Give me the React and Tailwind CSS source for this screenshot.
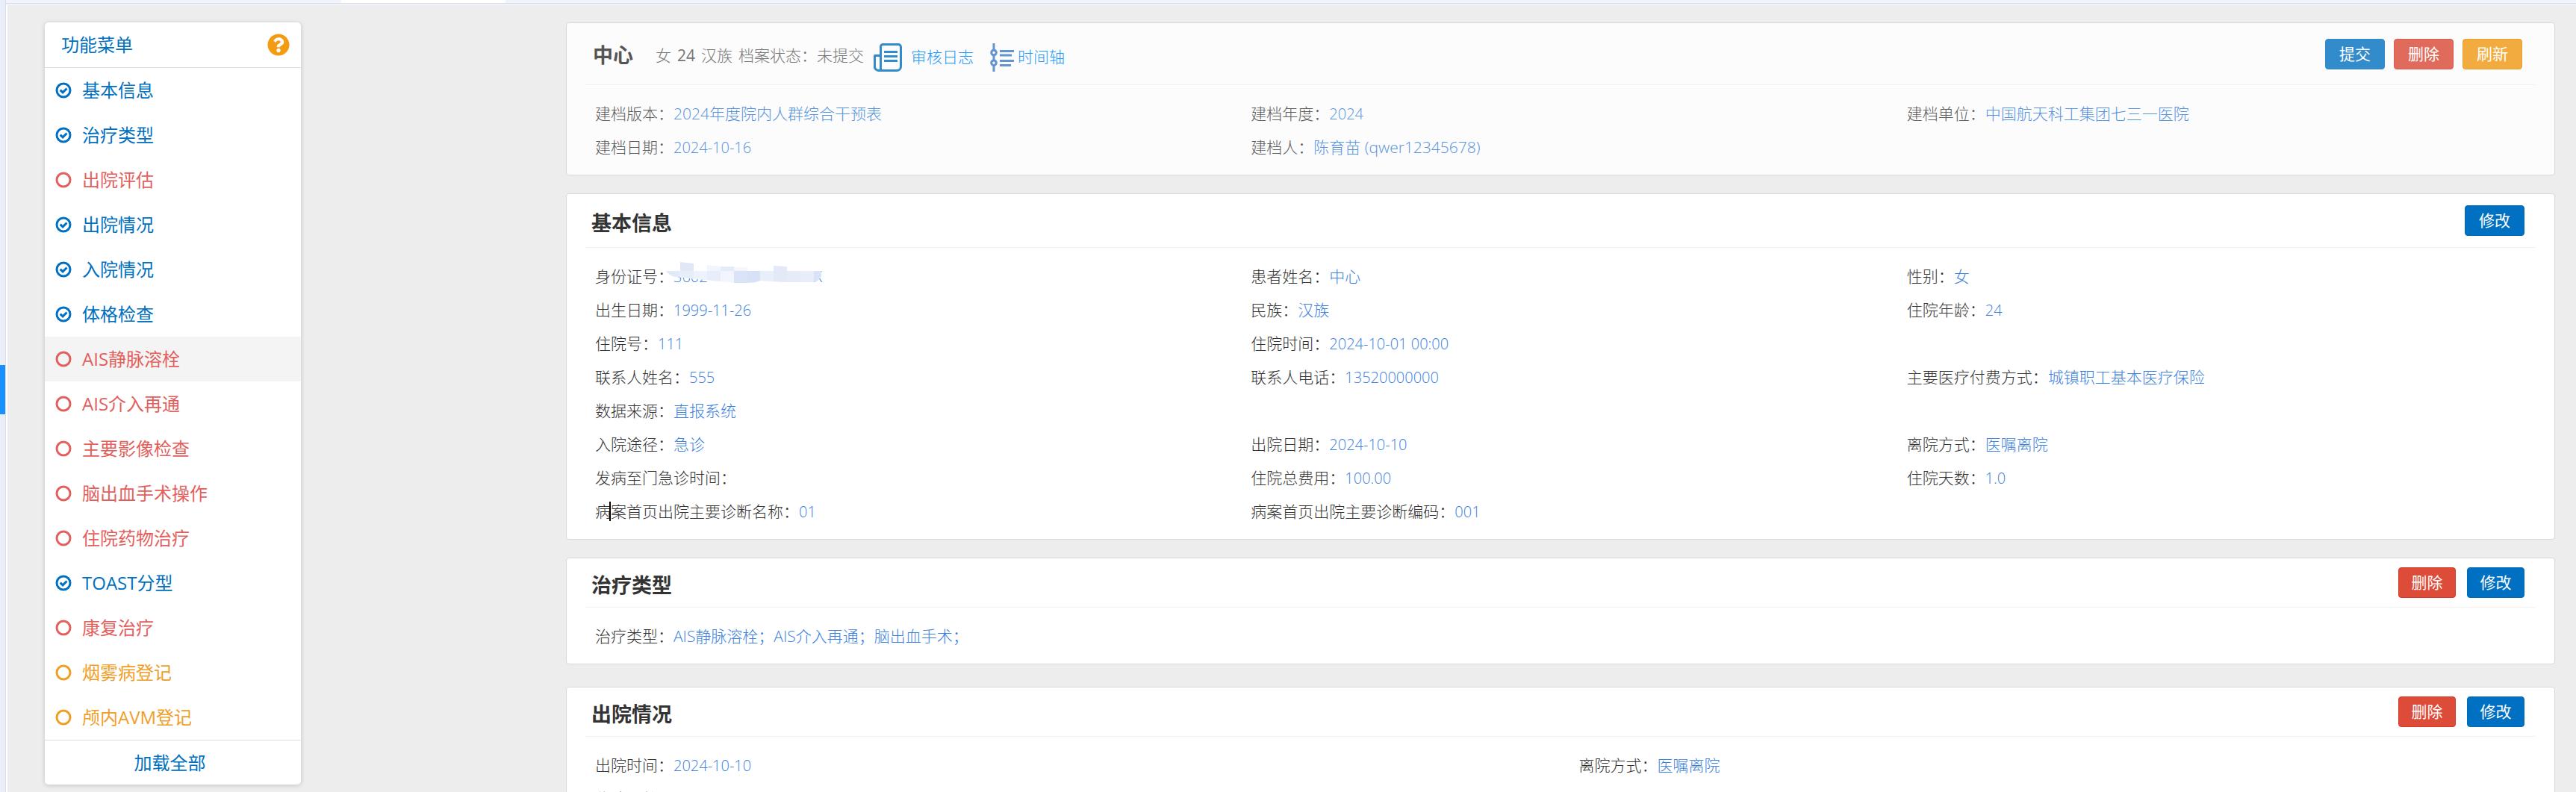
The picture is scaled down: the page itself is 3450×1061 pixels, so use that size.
import React from "react";
import { FaQuestionCircle } from "react-icons/fa";

const MENU = [
  ["基本信息", "done"],
  ["治疗类型", "done"],
  ["出院评估", "todo"],
  ["出院情况", "done"],
  ["入院情况", "done"],
  ["体格检查", "done"],
  ["AIS静脉溶栓", "todo", true],
  ["AIS介入再通", "todo"],
  ["主要影像检查", "todo"],
  ["脑出血手术操作", "todo"],
  ["住院药物治疗", "todo"],
  ["TOAST分型", "done"],
  ["康复治疗", "todo"],
  ["烟雾病登记", "optional"],
  ["颅内AVM登记", "optional"],
];

const TONES = {
  done: "text-[#0070c0]",
  todo: "text-[#e35f5e]",
  optional: "text-[#f09e28]",
};

const BUTTON_TONES = {
  primary: "border-[#006bb8] bg-[#0071c2]",
  danger: "border-[#d73925] bg-[#dd4b39]",
  primarySoft: "border-[#328bcb] bg-[#328bcb]",
  dangerSoft: "border-[#dc5d4d] bg-[#e06b5d]",
  warningSoft: "border-[#ea9f2f] bg-[#f2ab3f]",
};

function StatusIcon({ done }) {
  return (
    <svg viewBox="0 0 22 22" className="size-[22px] shrink-0" fill="none" stroke="currentColor" aria-hidden="true">
      <circle cx="11" cy="11" r="9" strokeWidth="3" />
      {done && <path d="M6.6 10.6l3.5 3.3 5.4-5.4" strokeWidth="3" />}
    </svg>
  );
}

function Btn({ tone, wide, children }) {
  return (
    <button
      type="button"
      className={`h-[41px] rounded-[4px] border text-[21px] leading-none font-normal text-white ${wide ? "w-[80px]" : "w-[77px]"} ${BUTTON_TONES[tone]}`}
    >
      {children}
    </button>
  );
}

function Card({ soft, className = "", children }) {
  return (
    <section className={`rounded-[4px] border border-[#d8d8d8] ${soft ? "bg-[#fcfcfc]" : "bg-white"} ${className}`}>
      {children}
    </section>
  );
}

function CardHead({ title, className, children }) {
  return (
    <div className={`mr-[25px] ml-[25px] flex items-center border-b border-[#f2f2f2] pr-[15px] pl-[8px] ${className}`}>
      <h2 className="pt-[6px] text-[27px] leading-[36px] font-bold text-[#333]">{title}</h2>
      <div className="ml-auto flex gap-[15px]">{children}</div>
    </div>
  );
}

function Fields({ cols = "grid-cols-3", soft, items }) {
  return (
    <dl className={`grid pt-[16px] pr-[4px] pb-[14px] pl-[23px] text-[21px] leading-[45px] font-light ${cols} ${soft ? "text-[#5c5c5c]" : "text-[#333]"}`}>
      {items.map((item, i) =>
        item ? (
          <div key={i} className="flex h-[45px] pl-[15px] whitespace-nowrap">
            <dt className="relative">
              {item[0]}：
              {item[2] && <i className="absolute top-[9px] left-[19px] h-[26px] w-[2px] bg-black" />}
            </dt>
            <dd className={`${soft ? "text-[#5592e0]" : "text-[#3c7fde]"} ${/^[\d.:\- ]+$/.test(item[1]) ? "text-[20px]" : ""}`}>
              {item[1]}
            </dd>
          </div>
        ) : (
          <div key={i} className="h-[45px]" />
        )
      )}
    </dl>
  );
}

const MOSAIC = [
  [0, 18, "#e2eaf7"], [18, 19, "#e6eefa"], [37, 18, "#edf2fc"], [55, 18, "#e7eefa"],
  [73, 18, "#f2f5fe"], [91, 18, "#dbe4f6"], [109, 17, "#d6e2f6"], [126, 18, "#e8effa"],
  [144, 18, "#e4e9f7"], [162, 18, "#e6ebf8"], [180, 18, "#e7eefa"], [198, 10, "#d9e2f6"],
];

function MaskedId() {
  return (
    <span className="relative flex w-[199px] justify-between text-[20px]">
      <span>3602</span>
      <span>X</span>
      <svg viewBox="0 0 208 28" className="absolute top-[3px] -left-[10px] h-[28px] w-[208px]" aria-hidden="true">
        <clipPath id="smear">
          <path d="M0 12H208V19Q204 26 198 27H157L126 25Q120 28 108 28H92L52 24L12 20Q3 17 0 12Z" />
        </clipPath>
        <rect x="8" width="200" height="13" fill="#fff" />
        <path d="M19 0l18 2v10H19z" fill="#e0e7f7" />
        <path d="M55 4l18 2v6H55z" fill="#f1f5fe" />
        <path d="M73 6h18v6H73z" fill="#e5ecf9" />
        <path d="M91 7h18v5H91z" fill="#f3f7fd" />
        <path d="M144 5l18 1v6h-18z" fill="#e4e9f8" />
        <g clipPath="url(#smear)">
          {MOSAIC.map(([x, w, c]) => (
            <rect key={x} x={x} y="12" width={w} height="16" fill={c} />
          ))}
        </g>
      </svg>
    </span>
  );
}

function LogIcon() {
  return (
    <svg viewBox="0 0 38 38" className="size-[38px]" fill="none" stroke="#328bcb" strokeWidth="3" strokeLinejoin="round" aria-hidden="true">
      <path d="M9.500 31V4.500a3 3 0 0 1 3-3H33a3.500 3.500 0 0 1 3.500 3.500V31a5.500 5.500 0 0 1-5.500 5.500H6.500A5 5 0 0 1 1.500 31V16.500h8M9.500 16V36" />
      <path d="M14 11.500h18M14 17.500h18M14 23.500h18" />
    </svg>
  );
}

function TimelineIcon() {
  return (
    <svg viewBox="0 0 32 38" className="h-[38px] w-[32px]" fill="none" stroke="#6394d0" strokeWidth="3" aria-hidden="true">
      <path d="M5 0v9M5 16v7M5 30v8" />
      <circle cx="5" cy="12.500" r="3.300" />
      <circle cx="5" cy="26.200" r="3.300" />
      <path d="M13 10.500h19M13 16h16M13 23.500h19M13 29.500h15" />
    </svg>
  );
}

export default function App() {
  return (
    <div className="flex h-screen overflow-hidden bg-[#ededed] font-['Open_Sans','Noto_Sans_CJK_SC',sans-serif]">
      <div className="flex w-[8px] shrink-0 flex-col border-r border-[#dcdde2] bg-[#eaeef8] pt-[489px]">
        <div className="h-[66px] bg-[#1890ff]" />
      </div>
      <div className="flex min-w-0 flex-1 flex-col">
        <div className="h-[7px] shrink-0 border-b-2 border-[#f0f3fd] bg-[#f1f4fd]">
          <div className="h-[5px] border-b border-[#dcdde2] pl-[449px]">
            <div className="h-[4px] w-[220px] bg-white" />
          </div>
        </div>
        <div className="flex flex-1 items-start border-l-2 border-white pt-[23px] pr-[28px] pl-[50px]">
          <nav className="w-[343px] shrink-0 rounded-[5px] bg-white text-[24px] font-normal text-[#0070c0] shadow-[0_1px_6px_rgba(0,0,0,0.18)]">
            <div className="flex h-[61px] items-center justify-between border-b border-[#dcdcdc] pr-[15px] pl-[22px]">
              <h2>功能菜单</h2>
              <button type="button" aria-label="帮助">
                <FaQuestionCircle className="size-[30px] text-[#f39c12]" />
              </button>
            </div>
            <ul>
              {MENU.map(([name, state, active]) => (
                <li key={name}>
                  <a href="#" className={`flex h-[60px] items-center gap-[14px] pl-[14px] ${TONES[state]} ${active ? "bg-[#f4f4f4]" : ""}`}>
                    <StatusIcon done={state === "done"} />
                    {name}
                  </a>
                </li>
              ))}
            </ul>
            <button type="button" className="h-[60px] w-full border-t border-[#dcdcdc] pr-[8px]">
              加载全部
            </button>
          </nav>

          <main className="ml-[355px] min-w-0 flex-1">
            <Card soft>
              <div className="mx-[25px] flex h-[83px] items-center border-b border-[#f2f2f2] pr-[18px] pl-[10px] text-[21px] whitespace-nowrap">
                <h1 className="pt-[4px] text-[27px] font-bold text-[#555]">中心</h1>
                <p className="ml-[30px] flex gap-[8px] pt-[6px] font-light text-[#777]">
                  <span>女</span>
                  <span className="font-normal">24</span>
                  <span>汉族</span>
                  <span>档案状态：未提交</span>
                </p>
                <a href="#" className="ml-[13px] flex items-center gap-[12px] pt-[10px] font-light text-[#1f99fb]">
                  <LogIcon />
                  审核日志
                </a>
                <a href="#" className="ml-[22px] flex items-center gap-[5px] pt-[10px] font-light text-[#1f99fb]">
                  <TimelineIcon />
                  时间轴
                </a>
                <div className="ml-auto flex gap-[12px]">
                  <Btn tone="primarySoft" wide>提交</Btn>
                  <Btn tone="dangerSoft" wide>删除</Btn>
                  <Btn tone="warningSoft" wide>刷新</Btn>
                </div>
              </div>
              <Fields
                soft
                items={[
                  ["建档版本", "2024年度院内人群综合干预表"],
                  ["建档年度", "2024"],
                  ["建档单位", "中国航天科工集团七三一医院"],
                  ["建档日期", "2024-10-16"],
                  ["建档人", "陈育苗 (qwer12345678)"],
                ]}
              />
            </Card>

            <Card className="mt-[24px]">
              <CardHead title="基本信息" className="h-[72px]">
                <Btn tone="primary" wide>修改</Btn>
              </CardHead>
              <Fields
                items={[
                  ["身份证号", <MaskedId />],
                  ["患者姓名", "中心"],
                  ["性别", "女"],
                  ["出生日期", "1999-11-26"],
                  ["民族", "汉族"],
                  ["住院年龄", "24"],
                  ["住院号", "111"],
                  ["住院时间", "2024-10-01 00:00"],
                  null,
                  ["联系人姓名", "555"],
                  ["联系人电话", "13520000000"],
                  ["主要医疗付费方式", "城镇职工基本医疗保险"],
                  ["数据来源", "直报系统"],
                  null,
                  null,
                  ["入院途径", "急诊"],
                  ["出院日期", "2024-10-10"],
                  ["离院方式", "医嘱离院"],
                  ["发病至门急诊时间", ""],
                  ["住院总费用", "100.00"],
                  ["住院天数", "1.0"],
                  ["病案首页出院主要诊断名称", "01", true],
                  ["病案首页出院主要诊断编码", "001"],
                ]}
              />
            </Card>

            <Card className="mt-[24px]">
              <CardHead title="治疗类型" className="h-[66px]">
                <Btn tone="danger">删除</Btn>
                <Btn tone="primary">修改</Btn>
              </CardHead>
              <Fields cols="grid-cols-1" items={[["治疗类型", "AIS静脉溶栓；AIS介入再通；脑出血手术；"]]} />
            </Card>

            <Card className="mt-[30px]">
              <CardHead title="出院情况" className="h-[66px]">
                <Btn tone="danger">删除</Btn>
                <Btn tone="primary">修改</Btn>
              </CardHead>
              <Fields
                cols="grid-cols-2"
                items={[
                  ["出院时间", "2024-10-10"],
                  ["离院方式", "医嘱离院"],
                  ["住院天数", "1.0"],
                ]}
              />
            </Card>
          </main>
        </div>
      </div>
    </div>
  );
}
